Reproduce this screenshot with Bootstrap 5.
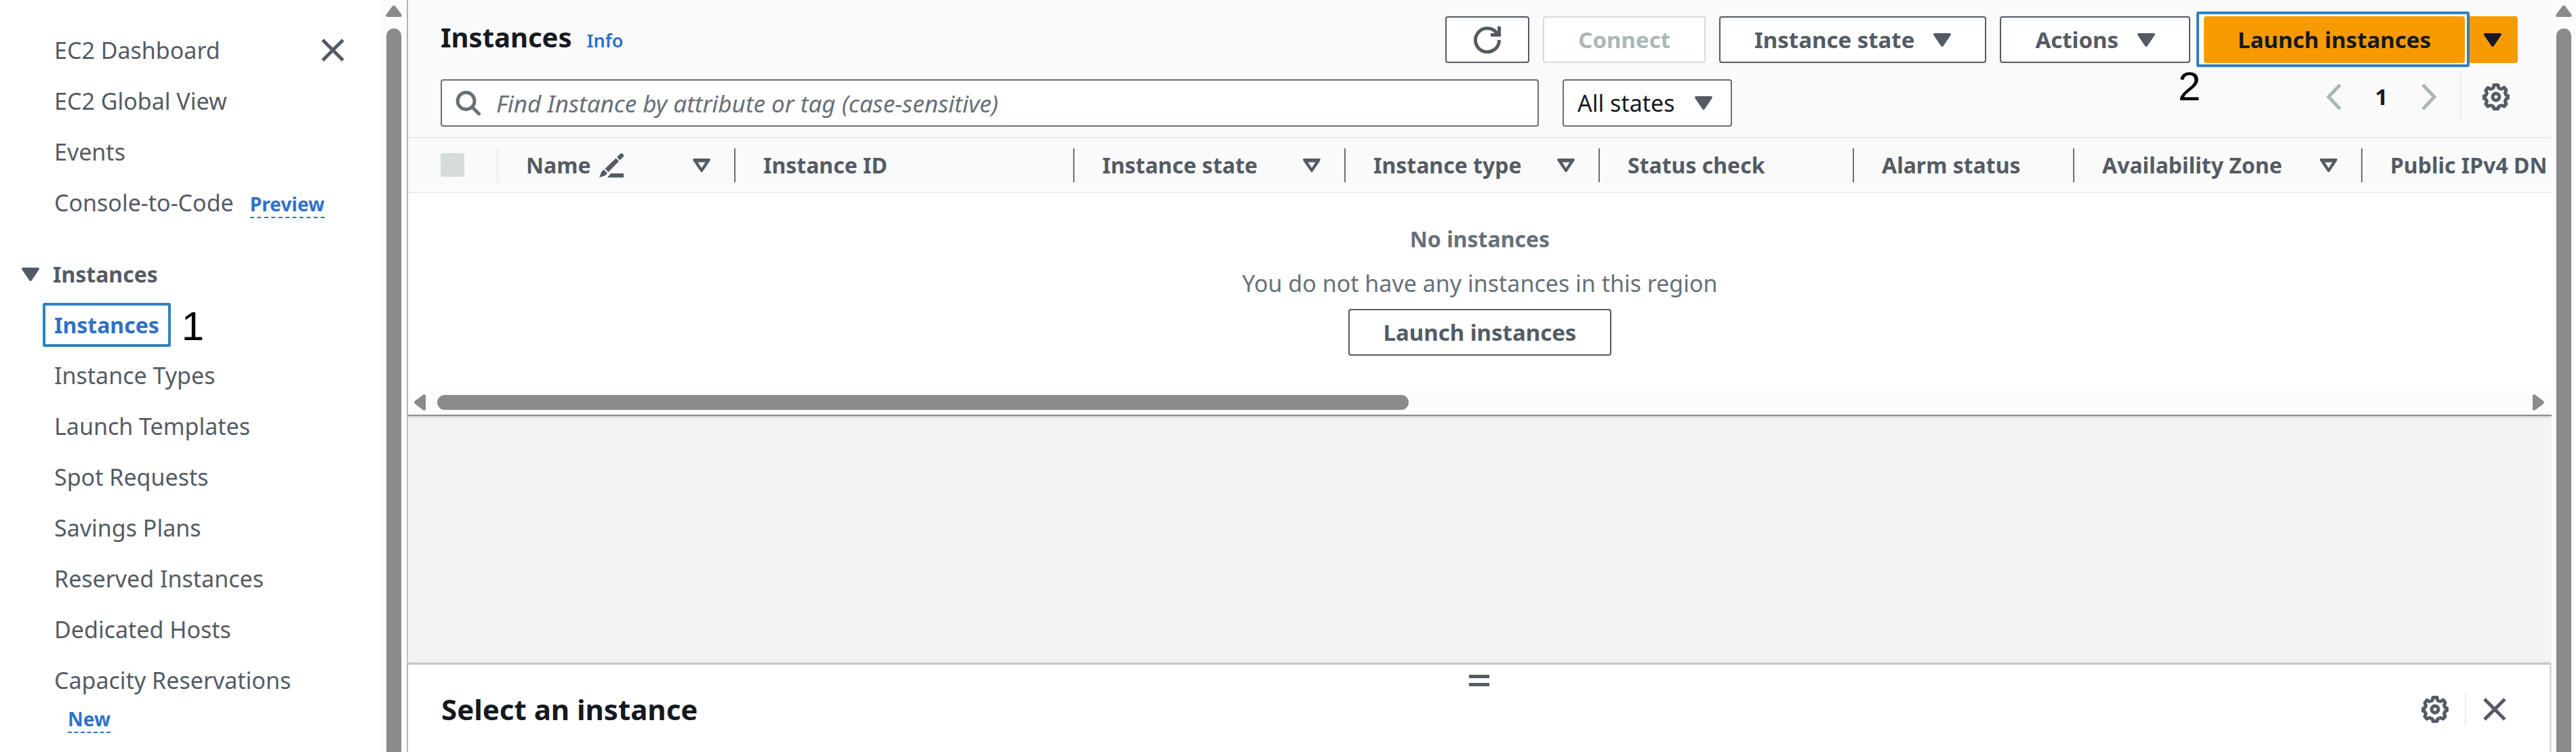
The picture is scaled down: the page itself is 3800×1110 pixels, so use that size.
<!DOCTYPE html>
<html lang="en">
<head>
<meta charset="utf-8">
<meta name="viewport" content="width=device-width, initial-scale=1">
<title>Instances | EC2</title>
<link href="https://cdn.jsdelivr.net/npm/bootstrap@5.3.0/dist/css/bootstrap.min.css" rel="stylesheet">
<style>
  :root { --ink:#16191f; --slate:#545b64; --gray:#687078; --link:#2f71c6; --line:#e9eded; --ring:#2a82c0; --thumb:#8b8b8b; }
  body { font-family:"Noto Sans","Open Sans",sans-serif; font-size:34px; line-height:46px; color:var(--slate); background:#fff; }
  svg { display:block; flex:none; fill:currentColor; }
  .line-icon { fill:none; stroke:currentColor; }

  .side-pane { flex:0 0 600px; }
  .side-links { padding:37px 0 0 80px; }
  .side-links a { color:inherit; text-decoration:none; }
  .side-row { height:75px; line-height:75px; white-space:nowrap; }
  .side-links .tag { color:var(--link); font-size:28px; line-height:38px; font-weight:700; border-bottom:2px dashed var(--link); }
  .side-head { margin:30px 0 0 -48px; gap:20px; font-size:32px; font-weight:700; }
  .side-links .ringed { color:var(--link); font-size:32px; line-height:57px; font-weight:700; border:4px solid var(--ring); border-radius:3px; padding:0 13px; margin-left:-17px; }
  .step-no { font-family:"Liberation Sans",Arial,sans-serif; font-size:60px; line-height:60px; color:#000; }
  .side-row .step-no { padding-top:4px; }
  .pane-close { margin:20px 54px 0 0; }
  .icon-btn { border:0; background:none; padding:0; color:var(--slate); }

  .bar-y { flex:none; width:38px; padding-top:8px; gap:17px; background:#fcfcfc; color:var(--thumb); }
  .bar-y .thumb { width:22px; border-radius:11px 11px 0 0; background:var(--thumb); }
  .bar-page { width:36px; }
  .bar-x { height:37px; padding:0 11px 0 9px; gap:17px; background:#fcfcfc; color:var(--thumb); }
  .bar-x .thumb { height:22px; border-radius:11px; background:var(--thumb); }

  .content { border-left:2px solid #bcc4c8; background:#f2f4f3; min-width:0; }
  .grid-card { background:#fff; border-bottom:2px solid #879196; box-shadow:0 1px 3px rgba(0,28,36,.3); }
  .grid-top { background:#fafafa; padding:24px 50px 15px 48px; border-bottom:2px solid var(--line); }
  .grid-top h1 { font-size:40px; line-height:62px; font-weight:700; color:var(--ink); margin:0; }
  .title-row { gap:22px; }
  .grid-top .info { font-size:27px; font-weight:600; color:var(--link); text-decoration:none; }
  .tools { gap:20px; }
  .tool { height:69px; padding:0 50px; gap:28px; display:flex; align-items:center; justify-content:center; border:2px solid var(--slate); border-radius:4px; background:#fff; color:var(--slate); font-size:33px; line-height:46px; font-weight:700; white-space:nowrap; }
  .tool.square { padding:0 40px; }
  .tool:disabled { color:#aab7b8; border-color:#d5dbdb; background:#fff; opacity:1; }
  .tool.main-act { background:#f79a00; border-color:#f79a00; color:var(--ink); padding:0 48px; }
  .tool.main-caret { background:#f79a00; border-color:#f79a00; color:var(--ink); padding:0 22px; }
  .launch-group { gap:4px; }
  .launch-ring { inset:-7px 71px -6px -11px; border:4px solid var(--ring); border-radius:3px; pointer-events:none; }
  .launch-no { left:-38px; top:74px; }

  .filters { margin-top:24px; gap:35px; }
  .search-wrap { flex:0 1 1620px; }
  .search-wrap svg { left:22px; top:17px; color:var(--gray); }
  .search-wrap input { height:70px; padding:0 20px 0 80px; border:2px solid var(--gray); border-radius:4px; font-size:35px; color:var(--ink); background:#fff; }
  .search-wrap input::placeholder { color:var(--gray); font-style:italic; opacity:1; }
  .state-wrap select { width:250px; height:70px; padding:0 60px 0 20px; border:2px solid var(--gray); border-radius:4px; font-size:34px; color:var(--ink); background:#fff; appearance:none; }
  .state-wrap svg { right:29px; top:25px; pointer-events:none; }
  .pager { height:69px; margin-top:-9px; padding-right:12px; color:#aab7b8; }
  .pager .page-no { width:116px; font-size:33px; font-weight:700; color:var(--ink); }
  .split-rule { border-left:2px solid var(--line); align-self:stretch; }
  .pager .split-rule { margin:0 31px 0 34px; }

  .grid-table { table-layout:fixed; --bs-table-bg:#fafafa; border-bottom:2px solid var(--line); }
  .grid-table th { height:80px; padding:0; vertical-align:middle; overflow:hidden; }
  .cell { height:50px; padding:0 35px 0 41px; border-right:2px solid var(--gray); color:var(--slate); font-size:32px; line-height:50px; font-weight:700; white-space:nowrap; display:flex; align-items:center; justify-content:space-between; }
  .cell.pick { padding-left:48px; border-color:var(--line); }
  .cell.tail { border:0; padding-right:0; }
  .cell .form-check-input { width:35px; height:35px; margin:0; border:0; border-radius:4px; background:#d5dbdb; opacity:1; }
  .name-label { gap:12px; }
  .empty { padding:45px 0 50px; color:var(--gray); }
  .empty strong { font-size:32px; line-height:46px; }
  .empty p { margin:19px 0 15px; }

  .detail { background:#fff; border-top:2px solid #b9bfc4; border-right:2px solid #d5dbdb; box-shadow:0 -1px 3px rgba(0,28,36,.2); padding:15px 0 33px; margin-right:1px; }
  .detail-head { padding:0 64px 0 49px; }
  .detail h2 { font-size:42px; line-height:60px; font-weight:700; color:var(--ink); margin:0; }
  .grip { display:block; width:30px; height:17px; border:solid var(--slate); border-width:5px 0; padding:0; background:none; }
  .detail .split-rule { margin:0 25px 0 21px; }
</style>
</head>
<body>
<svg width="0" height="0" class="position-absolute" aria-hidden="true">
  <defs>
    <symbol id="down" viewBox="0 0 26 20"><path d="M2.500 0h21q3.500 0 2 3L15 18.500q-2 3-4 0L.500 3Q-1 0 2.500 0z"/></symbol>
    <symbol id="sort" viewBox="0 0 26 20"><path fill-rule="evenodd" d="M2.500 0h21q3.500 0 2 3L15 18.500q-2 3-4 0L.500 3Q-1 0 2.500 0zM7.500 5.500 13 14l5.500-8.500z"/></symbol>
    <symbol id="up" viewBox="0 0 24 17"><path d="M14.500 1.500 23.500 13.500q1 3.500-2 3.500h-19q-3 0-2-3.500L9.500 1.500q2.500-3 5 0z"/></symbol>
    <symbol id="cross" viewBox="0 0 34 34"><path d="M2 2 32 32M32 2 2 32" fill="none" stroke="currentColor" stroke-width="5"/></symbol>
    <symbol id="gear" viewBox="0 0 40 40"><path fill="none" stroke="currentColor" stroke-width="5" stroke-linejoin="round" d="M17 2.500h6l1 4.500 4 1.500 4-2.500 3 4-1.500 4 1.500 3.500 3 1v3l-3 1.500-1.500 3.500 1.500 4-3 3.500-4-1.500-4 1.500-1 3.500h-6l-1-3.500-4-1.500-4 1.500-3-3.500 1.500-4L5 23.500l-3-1.500v-3l3-1 1.500-3.500L5 10.500l3-4 4 2 4-1.500z"/><circle cx="20" cy="20" r="5" fill="none" stroke="currentColor" stroke-width="5"/></symbol>
  </defs>
</svg>

<div class="d-flex vh-100 overflow-hidden">
  <aside class="side-pane d-flex">
    <nav class="side-links flex-grow-1" aria-label="EC2">
      <div class="side-row d-flex justify-content-between align-items-start">
        <a href="#">EC2 Dashboard</a>
        <button class="icon-btn pane-close" type="button" aria-label="Close navigation"><svg width="34" height="34"><use href="#cross"/></svg></button>
      </div>
      <div class="side-row"><a href="#">EC2 Global View</a></div>
      <div class="side-row"><a href="#">Events</a></div>
      <div class="side-row d-flex align-items-baseline"><a href="#">Console-to-Code</a><a href="#" class="tag ms-4">Preview</a></div>
      <div class="side-row side-head d-flex align-items-center"><svg width="26" height="20"><use href="#down"/></svg><span>Instances</span></div>
      <div class="side-row d-flex align-items-center"><a href="#" class="ringed" aria-current="page">Instances</a><span class="step-no ms-3">1</span></div>
      <div class="side-row"><a href="#">Instance Types</a></div>
      <div class="side-row"><a href="#">Launch Templates</a></div>
      <div class="side-row"><a href="#">Spot Requests</a></div>
      <div class="side-row"><a href="#">Savings Plans</a></div>
      <div class="side-row"><a href="#">Reserved Instances</a></div>
      <div class="side-row"><a href="#">Dedicated Hosts</a></div>
      <div class="side-row"><a href="#">Capacity Reservations</a></div>
      <div class="d-flex px-3 mx-1"><a href="#" class="tag">New</a></div>
    </nav>
    <div class="bar-y d-flex flex-column align-items-center" aria-hidden="true">
      <svg width="24" height="17"><use href="#up"/></svg>
      <div class="thumb flex-grow-1"></div>
    </div>
  </aside>

  <main class="content flex-grow-1 d-flex flex-column">
    <section class="grid-card">
      <header class="grid-top">
        <div class="d-flex justify-content-between align-items-start">
          <div class="title-row d-flex align-items-baseline">
            <h1>Instances</h1>
            <a href="#" class="info">Info</a>
          </div>
          <div class="tools d-flex">
            <button class="tool square" type="button" aria-label="Refresh">
              <svg class="line-icon" width="40" height="40" viewBox="0 0 40 40" stroke-width="5"><path d="M37.500 20A17.500 17.500 0 1 1 33 8.500L37 13M37.500 0v12.500H25"/></svg>
            </button>
            <button class="tool" type="button" disabled>Connect</button>
            <button class="tool" type="button">Instance state <svg width="26" height="20"><use href="#down"/></svg></button>
            <button class="tool" type="button">Actions <svg width="26" height="20"><use href="#down"/></svg></button>
            <div class="launch-group d-flex position-relative">
              <button class="tool main-act" type="button">Launch instances</button>
              <button class="tool main-caret" type="button" aria-label="More launch options"><svg width="26" height="20"><use href="#down"/></svg></button>
              <span class="launch-ring position-absolute"></span>
              <span class="launch-no step-no position-absolute">2</span>
            </div>
          </div>
        </div>
        <div class="filters d-flex align-items-start">
          <div class="search-wrap position-relative">
            <svg class="line-icon position-absolute" width="38" height="38" viewBox="0 0 38 38" stroke-width="5"><circle cx="15.500" cy="15" r="12.500"/><path d="m24.500 24 11.500 11.500"/></svg>
            <input class="w-100" type="text" placeholder="Find Instance by attribute or tag (case-sensitive)" aria-label="Find Instance by attribute or tag">
          </div>
          <div class="state-wrap position-relative">
            <select aria-label="Instance state filter"><option>All states</option></select>
            <svg class="position-absolute" width="26" height="20"><use href="#down"/></svg>
          </div>
          <div class="pager d-flex align-items-center ms-auto">
            <button class="icon-btn text-reset" type="button" aria-label="Previous page"><svg class="line-icon" width="24" height="38" viewBox="0 0 24 38" stroke-width="5"><path d="M21 1 4 19l17 18"/></svg></button>
            <span class="page-no text-center">1</span>
            <button class="icon-btn text-reset" type="button" aria-label="Next page"><svg class="line-icon" width="24" height="38" viewBox="0 0 24 38" stroke-width="5"><path d="M3 1l17 18L3 37"/></svg></button>
            <span class="split-rule"></span>
            <button class="icon-btn" type="button" aria-label="Preferences"><svg width="40" height="40"><use href="#gear"/></svg></button>
          </div>
        </div>
      </header>

      <table class="table table-borderless grid-table mb-0">
        <colgroup><col style="width:133px"><col style="width:350px"><col style="width:500px"><col style="width:400px"><col style="width:375px"><col style="width:375px"><col style="width:325px"><col style="width:425px"><col></colgroup>
        <thead>
          <tr>
            <th scope="col"><div class="cell pick"><input class="form-check-input" type="checkbox" disabled aria-label="Select all instances"></div></th>
            <th scope="col"><div class="cell"><span class="name-label d-flex align-items-center">Name
              <svg width="36" height="36" viewBox="0 0 36 36"><path d="m26 6 5-5q2-1.500 4 .500t.500 4l-5 5zM24.500 7.500l4.500 4.500L13.500 28 8.500 23zM7 24.500l5 5L9 33 0 36l3.500-9zM17 30h19v6H12z"/></svg></span>
              <svg width="26" height="20"><use href="#sort"/></svg></div></th>
            <th scope="col"><div class="cell">Instance ID</div></th>
            <th scope="col"><div class="cell">Instance state <svg width="26" height="20"><use href="#sort"/></svg></div></th>
            <th scope="col"><div class="cell">Instance type <svg width="26" height="20"><use href="#sort"/></svg></div></th>
            <th scope="col"><div class="cell">Status check</div></th>
            <th scope="col"><div class="cell">Alarm status</div></th>
            <th scope="col"><div class="cell">Availability Zone <svg width="26" height="20"><use href="#sort"/></svg></div></th>
            <th scope="col"><div class="cell tail">Public IPv4 DN</div></th>
          </tr>
        </thead>
      </table>

      <div class="empty d-flex flex-column align-items-center">
        <strong>No instances</strong>
        <p>You do not have any instances in this region</p>
        <button class="tool" type="button">Launch instances</button>
      </div>

      <div class="bar-x d-flex align-items-center" aria-hidden="true">
        <svg width="17" height="24" viewBox="0 0 17 24"><path d="M1.500 14.500 13.500 23.500q3.500 1 3.500-2v-19q0-3-3.500-2L1.500 9.500q-3 2.500 0 5z"/></svg>
        <div class="thumb" style="width:45.6%"></div>
        <svg class="ms-auto" width="17" height="24" viewBox="0 0 17 24"><path d="M15.500 14.500 3.500 23.500q-3.500 1-3.500-2v-19q0-3 3.500-2L15.500 9.500q3 2.500 0 5z"/></svg>
      </div>
    </section>

    <section class="detail mt-auto">
      <button class="grip mx-auto" type="button" aria-label="Resize panel"></button>
      <div class="detail-head d-flex align-items-center justify-content-between">
        <h2 class="pt-1">Select an instance</h2>
        <div class="d-flex align-items-center mt-1">
          <button class="icon-btn" type="button" aria-label="Panel preferences"><svg width="40" height="40"><use href="#gear"/></svg></button>
          <span class="split-rule ms-4 py-4 my-1"></span>
          <button class="icon-btn" type="button" aria-label="Close panel"><svg width="34" height="34"><use href="#cross"/></svg></button>
        </div>
      </div>
    </section>
  </main>

  <div class="bar-y bar-page d-flex flex-column align-items-center" aria-hidden="true">
    <svg width="24" height="17"><use href="#up"/></svg>
    <div class="thumb flex-grow-1"></div>
  </div>
</div>
<script src="https://cdn.jsdelivr.net/npm/bootstrap@5.3.0/dist/js/bootstrap.bundle.min.js"></script>
</body>
</html>
